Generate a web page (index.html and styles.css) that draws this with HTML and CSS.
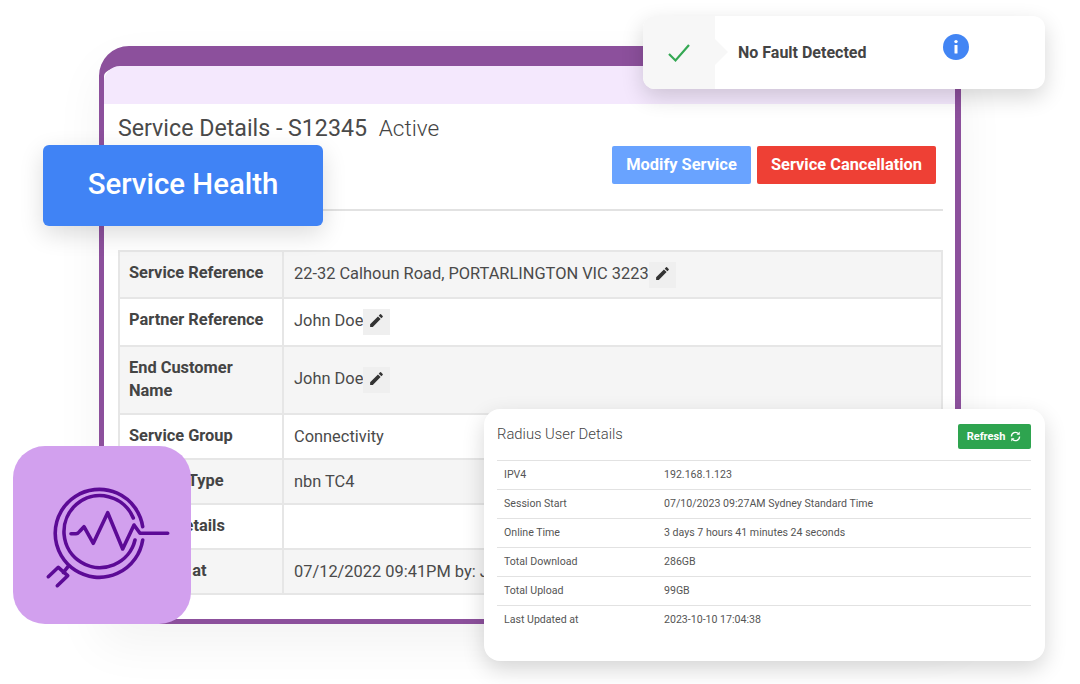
FILE: index.html
```html
<!DOCTYPE html>
<html lang="en">
<head>
  <meta charset="UTF-8" />
  <meta name="viewport" content="width=device-width, initial-scale=1.0" />
  <title>Service Health</title>
  <link rel="stylesheet" href="styles.css">
</head>
<body>
<div class="stage">

  <div class="window">
    <div class="window-bar"></div>
    <div class="window-body">
      <h2 class="service-title">Service Details - S12345 <span class="service-status">Active</span></h2>
      <div class="service-actions">
        <button class="btn btn-modify">Modify Service</button>
        <button class="btn btn-cancel">Service Cancellation</button>
      </div>
      <hr class="divider">
      <table class="details">
        <tr class="row-first">
          <th>Service Reference</th>
          <td>22-32 Calhoun Road, PORTARLINGTON VIC 3223<span class="edit"><svg viewBox="0 0 24 24"><path d="M3 17.25V21h3.75L17.81 9.94l-3.75-3.75L3 17.25zM20.71 7.04a1 1 0 0 0 0-1.41l-2.34-2.34a1 1 0 0 0-1.41 0l-1.83 1.83 3.75 3.75 1.83-1.83z"/></svg></span></td>
        </tr>
        <tr>
          <th>Partner Reference</th>
          <td>John Doe<span class="edit"><svg viewBox="0 0 24 24"><path d="M3 17.25V21h3.75L17.81 9.94l-3.75-3.75L3 17.25zM20.71 7.04a1 1 0 0 0 0-1.41l-2.34-2.34a1 1 0 0 0-1.41 0l-1.83 1.83 3.75 3.75 1.83-1.83z"/></svg></span></td>
        </tr>
        <tr>
          <th>End Customer<br>Name</th>
          <td>John Doe<span class="edit"><svg viewBox="0 0 24 24"><path d="M3 17.25V21h3.75L17.81 9.94l-3.75-3.75L3 17.25zM20.71 7.04a1 1 0 0 0 0-1.41l-2.34-2.34a1 1 0 0 0-1.41 0l-1.83 1.83 3.75 3.75 1.83-1.83z"/></svg></span></td>
        </tr>
        <tr>
          <th>Service Group</th>
          <td>Connectivity</td>
        </tr>
        <tr>
          <th>Service Type</th>
          <td>nbn TC4</td>
        </tr>
        <tr>
          <th>Other Details</th>
          <td>&nbsp;</td>
        </tr>
        <tr>
          <th>Ordered at</th>
          <td>07/12/2022 09:41PM by: J</td>
        </tr>
      </table>
    </div>
  </div>

  <!-- Floating cards over the window -->
  <div class="toast">
    <div class="toast-check">
      <svg viewBox="0 0 24 20"><path d="M2 11l6.5 6.5L22 2"/></svg>
    </div>
    <div class="toast-text">No Fault Detected</div>
    <svg class="toast-info" viewBox="0 0 26 26">
      <circle cx="13" cy="13" r="13"/>
      <circle class="info-mark" cx="13" cy="7.6" r="1.7"/>
      <rect class="info-mark" x="11.5" y="11" width="3" height="8.5" rx="0.5"/>
    </svg>
  </div>

  <div class="health-label">Service Health</div>

  <div class="health-tile">
    <svg viewBox="0 0 178 178">
      <path d="M129.7 80.7A44 44 0 1 0 129.7 94"/>
      <path d="M120.3 72A36 36 0 1 0 122 94"/>
      <path d="M58 87.7H63Q65 87.7 67 85L71 80.7L80.3 97.3L94.7 66.7L109.7 103L121 79L127 87.3H154.7"/>
      <path d="M55 120.7L50.3 126.7M35.3 130.7L45.3 121.3L54.7 129.7L44.3 139.7"/>
    </svg>
  </div>

  <div class="radius-card">
    <div class="radius-head">
      <h3>Radius User Details</h3>
      <button class="btn-refresh">Refresh
        <svg viewBox="0 0 16 16"><path d="M3 8a5 5 0 0 1 8.6-3.5M13 8a5 5 0 0 1-8.6 3.5"/><path class="arrow" d="M13.2 1.8v4h-4zM2.8 14.2v-4h4z"/></svg>
      </button>
    </div>
    <table class="radius-table">
      <tr><td>IPV4</td><td>192.168.1.123</td></tr>
      <tr><td>Session Start</td><td>07/10/2023 09:27AM Sydney Standard Time</td></tr>
      <tr><td>Online Time</td><td>3 days 7 hours 41 minutes 24 seconds</td></tr>
      <tr><td>Total Download</td><td>286GB</td></tr>
      <tr><td>Total Upload</td><td>99GB</td></tr>
      <tr><td>Last Updated at</td><td>2023-10-10 17:04:38</td></tr>
    </table>
  </div>

</div>
</body>
</html>
```

FILE: styles.css
```css
body {
  font-family: 'Roboto', 'Liberation Sans', sans-serif;
  background-color: #fff;
  margin: 0;
  padding: 0;
  color: #444;
}
.stage {
  position: relative;
  width: 1080px;
  height: 684px;
  padding: 46px 0 0 99px;
  box-sizing: border-box;
  overflow: hidden;
}

/* Main window */
.window {
  width: 862px;
  box-sizing: border-box;
  border: 5px solid #8c509c;
  border-top-width: 20px;
  border-right-width: 6px;
  border-radius: 30px 30px 0 0;
  background-color: #fff;
  box-shadow: 0 20px 50px rgba(0, 0, 0, 0.05);
}
.window-bar {
  height: 38px;
  background-color: #f4e8fd;
  border-radius: 16px 0 0 0;
}
.window-body {
  padding: 10px 12px 24px 14px;
}
.service-title {
  margin: 0;
  font-size: 23.2px;
  font-weight: 400;
  line-height: 28px;
  color: #4a4a4a;
}
.service-status {
  margin-left: 6px;
  font-size: 22.6px;
  font-weight: 300;
  color: #444;
}
.service-actions {
  display: flex;
  justify-content: flex-end;
  gap: 6px;
  margin-top: 3px;
  padding-right: 7px;
}
.btn {
  height: 38px;
  padding: 0 0 2px;
  border: none;
  border-radius: 2px;
  color: #fff;
  font-family: inherit;
  font-size: 16.4px;
  font-weight: 700;
}
.btn-modify {
  width: 139px;
  background-color: #69a3ff;
}
.btn-cancel {
  width: 179px;
  background-color: #ee4035;
}
.divider {
  margin: 25px 0 39px;
  border: none;
  border-top: 2px solid #e2e2e2;
}

/* Details table */
.details {
  width: 100%;
  border-collapse: collapse;
  font-size: 16.4px;
  line-height: 23px;
}
.details th, .details td {
  border: 2px solid #e6e6e6;
  padding: 10px;
  text-align: left;
  white-space: nowrap;
}
.details th {
  width: 143px;
  padding: 9px 10px 11px 9px;
  font-weight: 700;
  vertical-align: top;
  color: #444;
}
.details td {
  vertical-align: middle;
  color: #4a4a4a;
}
.details .row-first td {
  padding-bottom: 9px;
}
.details .row-first th {
  padding-bottom: 9px;
}
.details tr:nth-child(odd) th, .details tr:nth-child(odd) td {
  background-color: #f5f5f5;
}
.edit {
  display: inline-flex;
  align-items: center;
  justify-content: center;
  width: 27px;
  height: 26px;
  vertical-align: middle;
  background-color: #efefef;
}
.edit svg {
  width: 17px;
  height: 17px;
  margin-bottom: 3px;
  fill: #333;
}

/* No fault toast */
.toast {
  position: absolute;
  left: 643px;
  top: 16px;
  width: 402px;
  height: 73px;
  display: flex;
  align-items: center;
  background-color: #fff;
  border-radius: 12px;
  box-shadow: 0 8px 22px rgba(0, 0, 0, 0.16);
}
.toast-check {
  position: relative;
  width: 72px;
  height: 73px;
  display: flex;
  align-items: center;
  justify-content: center;
  background-color: #f7f7f7;
  border-radius: 12px 0 0 12px;
}
.toast-check::after {
  content: '';
  position: absolute;
  left: 72px;
  top: 23px;
  border-left: 13px solid #f7f7f7;
  border-top: 13px solid transparent;
  border-bottom: 13px solid transparent;
}
.toast-check svg {
  width: 24px;
  height: 20px;
  fill: none;
  stroke: #34a853;
  stroke-width: 2.2;
}
.toast-text {
  margin-left: 23px;
  font-size: 16px;
  font-weight: 700;
  color: #444;
}
.toast-info {
  position: absolute;
  left: 300px;
  top: 18px;
  width: 26px;
  height: 26px;
  fill: #4285f4;
}
.toast-info .info-mark {
  fill: #fff;
}

/* Service health label */
.health-label {
  position: absolute;
  left: 43px;
  top: 145px;
  width: 280px;
  height: 81px;
  box-sizing: border-box;
  padding-bottom: 4px;
  display: flex;
  align-items: center;
  justify-content: center;
  background-color: #4083f5;
  border-radius: 6px;
  color: #fff;
  font-size: 29.4px;
  font-weight: 500;
  box-shadow: 0 8px 24px rgba(0, 0, 0, 0.14);
}

/* Icon tile */
.health-tile {
  position: absolute;
  left: 13px;
  top: 446px;
  width: 178px;
  height: 178px;
  background-color: #d2a0ee;
  border-radius: 32px;
}
.health-tile svg {
  display: block;
  width: 178px;
  height: 178px;
  fill: none;
  stroke: #5c0a96;
  stroke-width: 3.6;
  stroke-linecap: round;
  stroke-linejoin: round;
}

/* Radius card */
.radius-card {
  position: absolute;
  left: 484px;
  top: 409px;
  width: 561px;
  height: 252px;
  box-sizing: border-box;
  padding: 15px 14px 0 13px;
  background-color: #fff;
  border-radius: 16px;
  box-shadow: 0 8px 22px rgba(0, 0, 0, 0.16);
}
.radius-head {
  display: flex;
  justify-content: space-between;
  align-items: flex-start;
  height: 36px;
}
.radius-head h3 {
  margin: 0;
  font-size: 14.8px;
  font-weight: 300;
  line-height: 20px;
  color: #444;
}
.btn-refresh {
  width: 73px;
  height: 25px;
  display: flex;
  align-items: center;
  justify-content: center;
  gap: 4px;
  border: none;
  border-radius: 2px;
  background-color: #2ea44f;
  color: #fff;
  font-family: inherit;
  font-size: 11px;
  font-weight: 700;
}
.btn-refresh svg {
  width: 13px;
  height: 13px;
  fill: none;
  stroke: #fff;
  stroke-width: 1.6;
}
.btn-refresh svg .arrow {
  fill: #fff;
  stroke: none;
}
.radius-table {
  width: 100%;
  border-collapse: collapse;
  font-size: 10.6px;
  color: #555;
}
.radius-table td {
  height: 26px;
  padding: 0 7px 2px;
  border-top: 1px solid #e2e2e2;
}
.radius-table td:first-child {
  width: 146px;
}
```
